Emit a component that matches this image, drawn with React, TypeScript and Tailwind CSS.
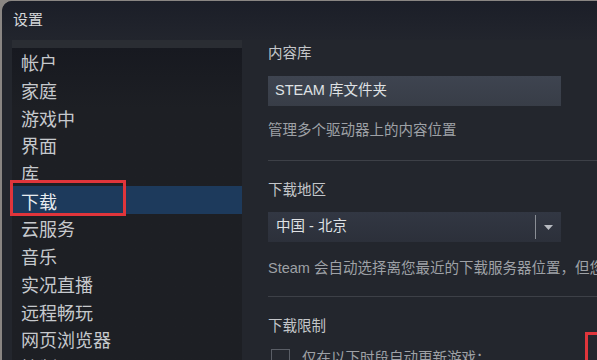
import React from "react";

const navItems = ["帐户", "家庭", "游戏中", "界面", "库", "下载", "云服务", "音乐", "实况直播", "远程畅玩", "网页浏览器", "控制器"];

export default function App() {
  return (
    <div
      className="w-[597px] h-[360px] overflow-hidden bg-[#8a8683] pl-[2px] pt-[1px]"
      style={{ fontFamily: '"Liberation Sans", "Noto Sans CJK SC", sans-serif' }}
    >
      <div className="w-full h-full rounded-tl-[10px] overflow-hidden bg-[#23262d] flex flex-col">
        <div className="h-[39px] shrink-0 bg-gradient-to-b from-[#1b1e28] to-[#22252d] flex items-center pl-[11px] text-[15px] text-[#d4d6d9]">
          设置
        </div>
        <div className="flex flex-1 min-h-0 overflow-hidden">
          <div className="w-[230px] ml-[10px] shrink-0 bg-[#1d1f24] flex flex-col">
            <div className="h-[8px] shrink-0 bg-[#2a2d33]" />
            <div className="shrink-0 bg-gradient-to-b from-[#171920] to-[#1d1f24] to-[60px]">
              {navItems.map((item) => {
                const sel = item === "下载";
                return (
                  <div key={item} className="relative">
                    <div
                      className={`h-[27.7px] flex items-center pl-[9px] pt-[5px] text-[18px] leading-none ${
                        sel ? "bg-[#1d3a5c] text-[#e8ecf0]" : "text-[#c6c9cd]"
                      }`}
                    >
                      {item}
                    </div>
                    {sel && (
                      <div className="absolute left-[-2px] top-[-6px] w-[116px] h-[36px] border-[3px] border-[#e0353b]" />
                    )}
                  </div>
                );
              })}
            </div>
          </div>
          <div className="flex-1 min-w-0 pl-[26px] flex flex-col relative">
            <div className="mt-[4px] shrink-0 text-[14.5px] text-[#c4c6ca] leading-none h-[18px] flex items-center">内容库</div>
            <div className="mt-[14px] shrink-0 w-[293px] h-[30px] bg-gradient-to-b from-[#3e4450] to-[#383d47] flex items-center pl-[7px] text-[14.5px] text-[#dfe1e4]">
              STEAM 库文件夹
            </div>
            <div className="mt-[15px] shrink-0 text-[14.5px] text-[#9ea1a6] leading-none h-[18px] flex items-center whitespace-nowrap">
              管理多个驱动器上的内容位置
            </div>
            <div className="mt-[21px] shrink-0 h-px bg-[#3d4047]" />
            <div className="mt-[20px] shrink-0 text-[14.5px] text-[#c4c6ca] leading-none h-[18px] flex items-center">下载地区</div>
            <div className="mt-[13px] shrink-0 w-[293px] h-[30px] bg-gradient-to-b from-[#323743] to-[#2c303a] flex items-center text-[14.5px] text-[#dfe1e4]">
              <div className="flex-1 pl-[8px]">中国 - 北京</div>
              <div className="w-px h-[24px] bg-[#8a8e95]" />
              <div className="w-[25px] flex justify-center">
                <svg width="9" height="5" viewBox="0 0 9 5">
                  <path d="M0 0 L9 0 L4.5 5 Z" fill="#b7bac0" />
                </svg>
              </div>
            </div>
            <div className="mt-[17px] shrink-0 text-[14.5px] text-[#9ea1a6] leading-none h-[18px] flex items-center whitespace-nowrap">
              Steam 会自动选择离您最近的下载服务器位置，但您可以选择其他服务器。
            </div>
            <div className="mt-[19px] shrink-0 h-px bg-[#3d4047]" />
            <div className="mt-[20px] shrink-0 text-[14.5px] text-[#c4c6ca] leading-none h-[18px] flex items-center">下载限制</div>
            <div className="mt-[14px] shrink-0 flex items-center">
              <div className="ml-[3px] w-[19px] h-[19px] border border-[#5a5e66] bg-[#25282f]" />
              <div className="ml-[12px] text-[14.5px] text-[#9ea1a6] whitespace-nowrap leading-none">仅在以下时段自动更新游戏：</div>
            </div>
            <div className="absolute left-[343px] top-[292px] w-[30px] h-[60px] border-[3px] border-[#e0353b]" />
          </div>
        </div>
      </div>
    </div>
  );
}
